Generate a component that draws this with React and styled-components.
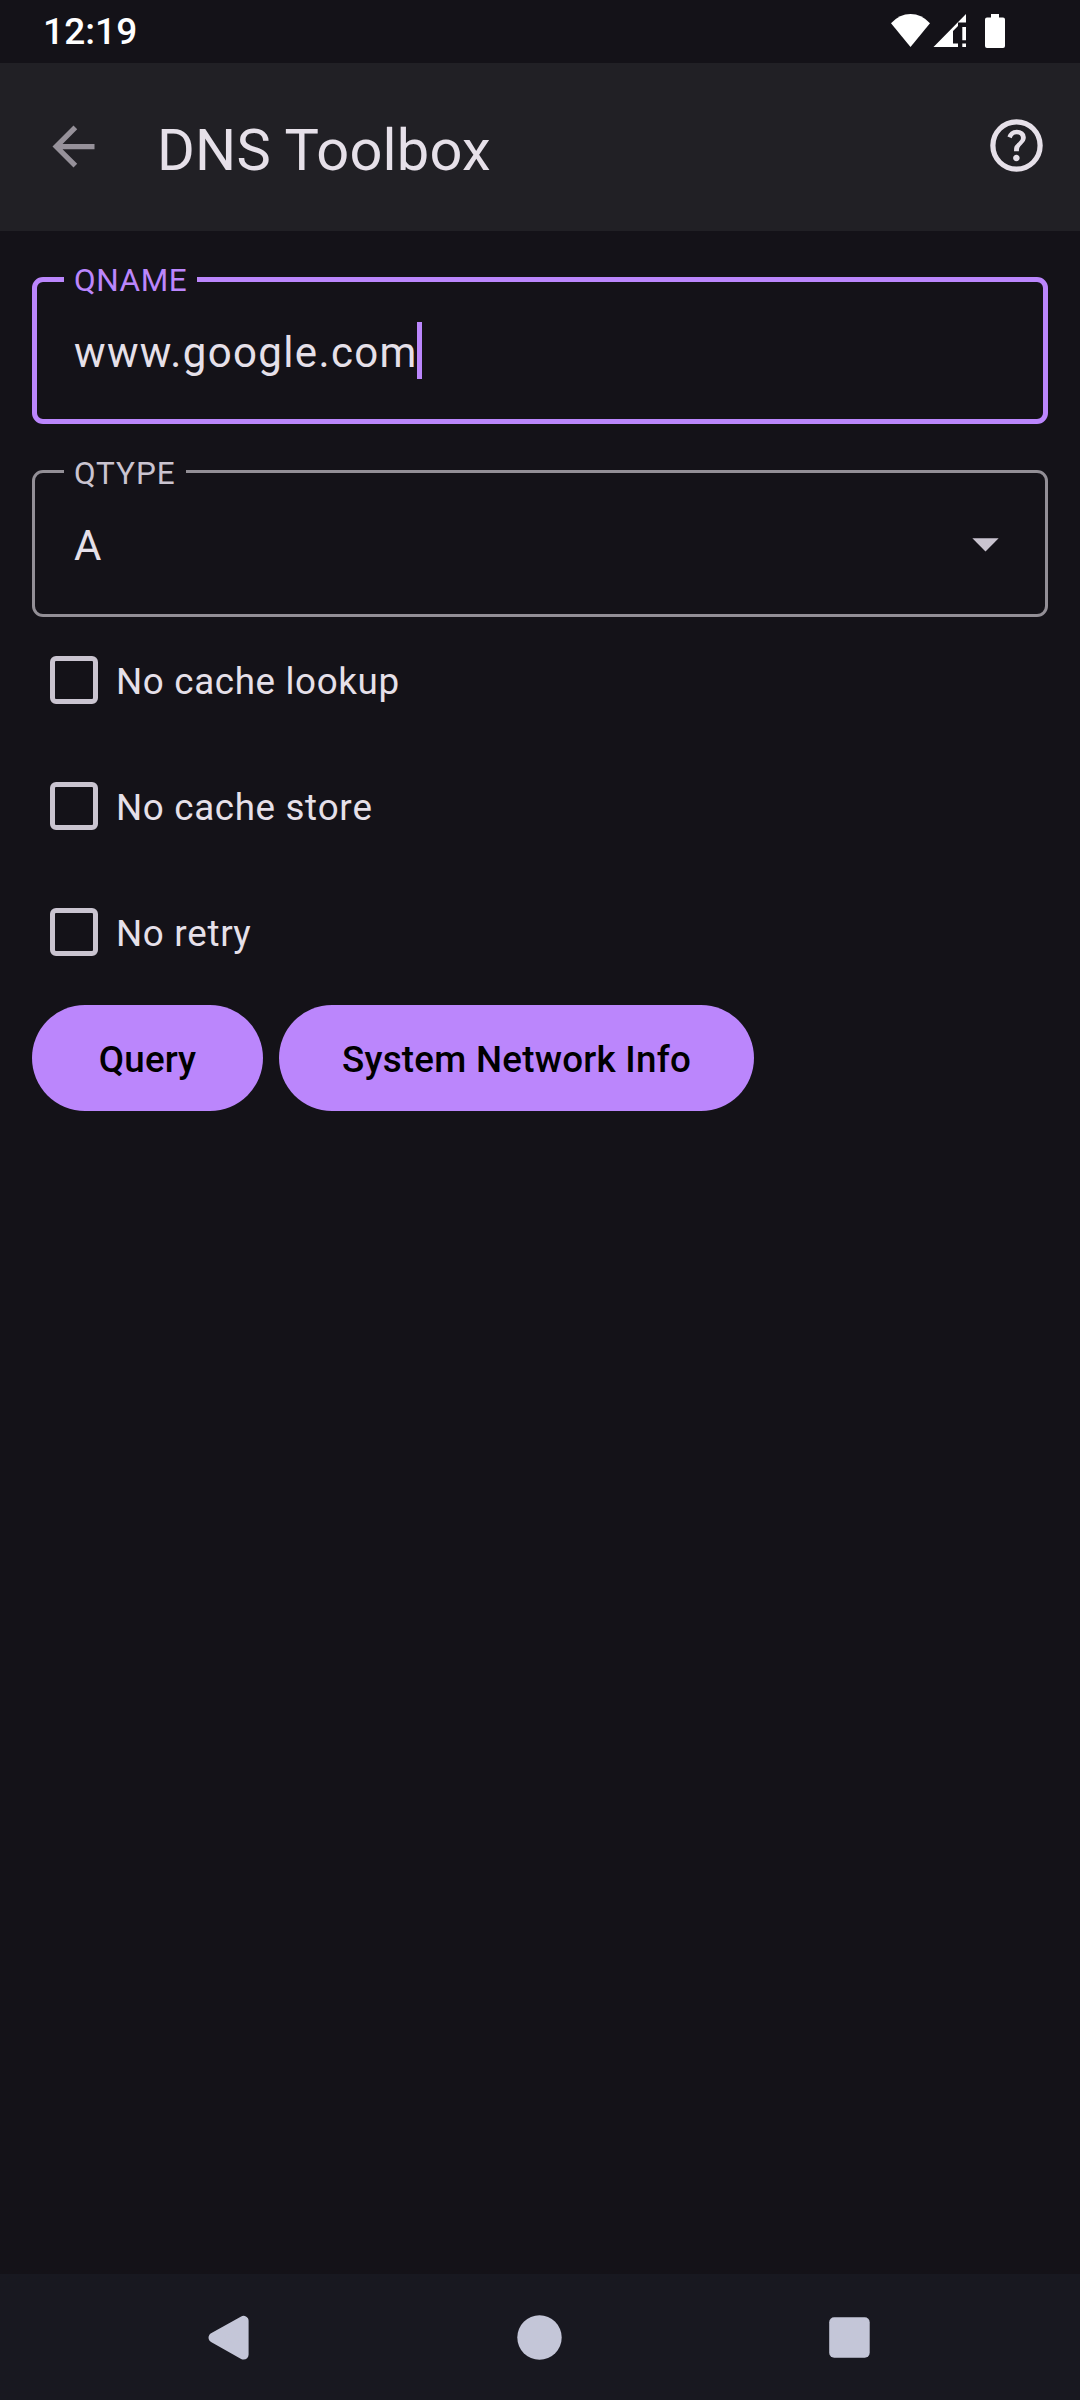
import React from "react";
import styled, { createGlobalStyle } from "styled-components";

const color = {
  bg: "#141218",
  bar: "#212025",
  nav: "#181820",
  navIcon: "#c4c6d8",
  accent: "#bb86fc",
  text: "#e6e0e9",
  muted: "#cac4d0",
  outline: "#938f96",
};

const Global = createGlobalStyle`
  *, *::before, *::after { box-sizing: border-box; }
  body { margin: 0; background: ${color.bg}; }
`;

const Screen = styled.div`
  display: flex;
  flex-direction: column;
  width: 1080px;
  height: 2400px;
  background: ${color.bg};
  color: ${color.text};
  font-family: Roboto, "Liberation Sans", sans-serif;
  font-size: 36.75px;
`;

const StatusBar = styled.header`
  display: flex;
  justify-content: space-between;
  height: 63px;
  padding: 0 74px 0 43px;
  color: #fff;
`;

const Clock = styled.span`
  font-size: 37px;
  font-weight: 500;
  line-height: 63px;
  letter-spacing: 0.1px;
`;

const StatusIcons = styled.svg`
  width: 116px;
  height: 36px;
  margin-top: 13px;
  fill: #fff;
`;

const AppBar = styled.div`
  display: flex;
  align-items: center;
  height: 168px;
  padding: 0 32px 0 42px;
  background: ${color.bar};
`;

const Title = styled.h1`
  flex: 1;
  margin: 5px 0 0 52px;
  font-size: 57.75px;
  font-weight: 400;
  line-height: 76px;
  letter-spacing: 0.2px;
`;

const BarIcon = styled.svg`
  width: 63px;
  height: 63px;
  margin-bottom: ${(p) => p.$lift || 0}px;
  fill: ${(p) => p.$fill};
`;

const Content = styled.main`
  flex: 1;
  display: flex;
  flex-direction: column;
  padding: 30px 32px 0;
`;

const Field = styled.fieldset`
  min-width: 0;
  height: ${(p) => (p.$active ? 163 : 164)}px;
  margin: 0 0 ${(p) => (p.$active ? 29 : 0)}px;
  padding: 0 ${(p) => (p.$active ? 27 : 29)}px;
  border: ${(p) => (p.$active ? 5 : 3)}px solid ${(p) => (p.$active ? color.accent : color.outline)};
  border-radius: 11px;
`;

const Label = styled.legend`
  height: 37px;
  padding: 0 10px;
  color: ${(p) => (p.$active ? color.accent : color.muted)};
  font-size: 31.5px;
  line-height: ${(p) => (p.$active ? 40 : 41)}px;
  letter-spacing: ${(p) => (p.$active ? 0.6 : 1)}px;
`;

const FieldRow = styled.div`
  display: flex;
  align-items: center;
  justify-content: space-between;
  height: ${(p) => p.$height}px;
`;

const Value = styled.span`
  display: flex;
  align-items: center;
  padding-left: 10px;
`;

const ValueText = styled.span`
  padding-top: ${(p) => p.$drop}px;
  font-size: 42px;
  line-height: 53px;
  letter-spacing: 1.37px;
`;

const Caret = styled.i`
  width: 5px;
  height: 57px;
  margin-left: -1px;
  background: ${color.accent};
`;

const DropIcon = styled.svg`
  width: 63px;
  height: 63px;
  margin: 0 -1px 1px 0;
  fill: ${color.muted};
`;

const Option = styled.label`
  display: flex;
  align-items: center;
  gap: 18px;
  height: 126px;
  padding-left: 18px;
`;

const Box = styled.span`
  width: 48px;
  height: 48px;
  border: 5px solid ${color.muted};
  border-radius: 6px;
`;

const OptionText = styled.span`
  margin-top: 4px;
  line-height: 50px;
  letter-spacing: 0.65px;
  font-kerning: none;
`;

const Options = styled.div`
  display: flex;
  flex-direction: column;
`;

const Actions = styled.div`
  display: flex;
  gap: 16px;
  margin-top: 10px;
`;

const Button = styled.button`
  width: ${(p) => p.$width}px;
  height: 106px;
  padding: 4px 0 0;
  border: 0;
  border-radius: 53px;
  background: ${color.accent};
  color: #000;
  font: 500 36.75px/50px Roboto, "Liberation Sans", sans-serif;
  font-kerning: none;
  letter-spacing: 0.25px;
`;

const NavBar = styled.nav`
  display: flex;
  align-items: center;
  justify-content: space-between;
  height: 126px;
  padding: 0 199px 0 197px;
  background: ${color.nav};
`;

const NavIcon = styled.svg`
  width: 63px;
  height: 63px;
  fill: ${color.navIcon};
`;

const BackShape = styled.path`
  stroke: ${color.navIcon};
  stroke-width: 10px;
  stroke-linejoin: round;
`;

const options = ["No cache lookup", "No cache store", "No retry"];

export default function App() {
  return (
    <Screen>
      <Global />
      <StatusBar>
        <Clock>12:19</Clock>
        <StatusIcons viewBox="890 13 116 36">
          <path d="M910.5 47 891 23.3Q899.5 14 910.5 14T930 23.3Z" />
          <path d="M933.5 47 966 14V22.5H958V26L953 31V43.5H958V47Z" />
          <path d="M962.3 27h3.7v13.3h-3.7zM962.3 43.5h3.7V47h-3.7z" />
          <path d="M991 14h8v3.500h4q2 0 2 2V46q0 2-2 2h-16q-2 0-2-2V19.500q0-2 2-2h4z" />
        </StatusIcons>
      </StatusBar>
      <AppBar>
        <BarIcon viewBox="0 0 24 24" $fill="#96919a" $lift={1}>
          <path d="M20 11H7.83l5.59-5.59L12 4l-8 8 8 8 1.41-1.41L7.83 13H20z" />
        </BarIcon>
        <Title>DNS Toolbox</Title>
        <BarIcon viewBox="0 0 960 960" $fill={color.text} $lift={3}>
          <path d="M478,720Q499,720 513.5,705.5Q528,691 528,670Q528,649 513.5,634.5Q499,620 478,620Q457,620 442.5,634.5Q428,649 428,670Q428,691 442.5,705.5Q457,720 478,720ZM442,566L516,566Q516,533 523.5,514Q531,495 566,462Q592,436 607,412.5Q622,389 622,356Q622,300 581,270Q540,240 484,240Q427,240 391.5,270Q356,300 342,342L408,368Q413,350 430.5,329Q448,308 484,308Q516,308 532,325.5Q548,343 548,364Q548,384 536,401.5Q524,419 506,434Q462,473 452,493Q442,513 442,566ZM480,880Q397,880 324,848.5Q251,817 197,763Q143,709 111.5,636Q80,563 80,480Q80,397 111.5,324Q143,251 197,197Q251,143 324,111.5Q397,80 480,80Q563,80 636,111.5Q709,143 763,197Q817,251 848.5,324Q880,397 880,480Q880,563 848.5,636Q817,709 763,763Q709,817 636,848.5Q563,880 480,880ZM480,800Q614,800 707,707Q800,614 800,480Q800,346 707,253Q614,160 480,160Q346,160 253,253Q160,346 160,480Q160,614 253,707Q346,800 480,800Z" />
        </BarIcon>
      </AppBar>
      <Content>
        <Field $active>
          <Label $active>QNAME</Label>
          <FieldRow $height={105}>
            <Value>
              <ValueText $drop={4}>www.google.com</ValueText>
              <Caret />
            </Value>
          </FieldRow>
        </Field>
        <Field>
          <Label>QTYPE</Label>
          <FieldRow $height={108}>
            <Value>
              <ValueText $drop={2}>A</ValueText>
            </Value>
            <DropIcon viewBox="0 0 24 24">
              <path d="M7 10l5 5 5-5z" />
            </DropIcon>
          </FieldRow>
        </Field>
        <Options>
          {options.map((name) => (
            <Option key={name}>
              <Box />
              <OptionText>{name}</OptionText>
            </Option>
          ))}
        </Options>
        <Actions>
          <Button $width={231}>Query</Button>
          <Button $width={475}>System Network Info</Button>
        </Actions>
      </Content>
      <NavBar>
        <NavIcon viewBox="0 0 63 63">
          <BackShape d="M16.5 31.6 46.6 14.8V48.6Z" />
        </NavIcon>
        <NavIcon viewBox="0 0 63 63">
          <circle cx="31.5" cy="31.5" r="22.2" />
        </NavIcon>
        <NavIcon viewBox="0 0 63 63">
          <rect x="11.2" y="11.2" width="40.5" height="40.5" rx="5" />
        </NavIcon>
      </NavBar>
    </Screen>
  );
}
